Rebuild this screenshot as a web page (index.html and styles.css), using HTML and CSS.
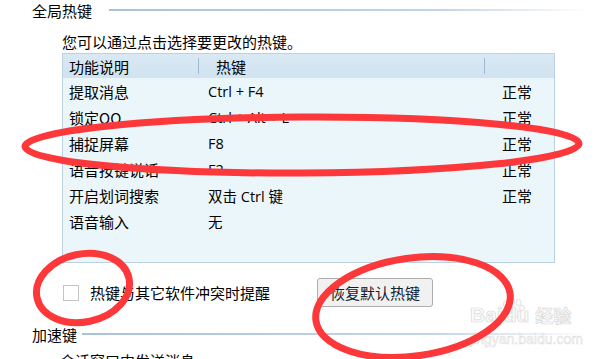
FILE: index.html
```html
<!DOCTYPE html>
<html lang="zh-cn">
<head>
  <meta charset="UTF-8">
  <title>全局热键</title>
  <link rel="stylesheet" href="styles.css">
</head>
<body>
  <div class="group-title">
    <span>全局热键</span>
    <div class="rule"></div>
  </div>
  <p class="intro">您可以通过点击选择要更改的热键。</p>

  <div class="hotkey-table">
    <div class="head">
      <div class="h-name">功能说明</div>
      <div class="sep"></div>
      <div class="h-key">热键</div>
      <div class="sep"></div>
    </div>
    <div class="row"><div class="c-name">提取消息</div><div class="c-key">Ctrl + F4</div><div class="c-state">正常</div></div>
    <div class="row"><div class="c-name">锁定QQ</div><div class="c-key">Ctrl + Alt + L</div><div class="c-state">正常</div></div>
    <div class="row"><div class="c-name">捕捉屏幕</div><div class="c-key">F8</div><div class="c-state">正常</div></div>
    <div class="row"><div class="c-name">语音按键说话</div><div class="c-key">F2</div><div class="c-state">正常</div></div>
    <div class="row"><div class="c-name">开启划词搜索</div><div class="c-key">双击 Ctrl 键</div><div class="c-state">正常</div></div>
    <div class="row"><div class="c-name">语音输入</div><div class="c-key">无</div><div class="c-state"></div></div>
  </div>

  <div class="options">
    <span class="checkbox"></span>
    <label class="opt-label">热键与其它软件冲突时提醒</label>
    <button class="btn">恢复默认热键</button>
  </div>

  <div class="group-title second">
    <span>加速键</span>
    <div class="rule"></div>
  </div>
  <p class="intro cut">会话窗口中发送消息</p>

  <div class="watermark">
    <div class="wm-logo">
      <span>Bai</span>
      <svg class="paw" width="26" height="22" viewBox="0 0 26 22">
        <ellipse cx="6" cy="6" rx="2.6" ry="3.2" />
        <ellipse cx="12" cy="3.5" rx="2.6" ry="3.2" />
        <ellipse cx="18.5" cy="4.5" rx="2.6" ry="3.2" />
        <ellipse cx="22" cy="10" rx="2.4" ry="3" />
        <path d="M5 19 C5 13 9 10 13 10 C17 10 20 14 20 19 Z" />
      </svg>
      <span class="du">du</span>
      <span class="jy">经验</span>
    </div>
    <div class="wm-url">jingyan.baidu.com</div>
  </div>

  <svg class="marks" width="614" height="359" viewBox="0 0 614 359">
    <ellipse cx="302" cy="145" rx="277" ry="28" transform="rotate(-0.3 302 145)" />
    <ellipse cx="83" cy="288" rx="47" ry="34" transform="rotate(-12 83 288)" />
    <ellipse cx="413" cy="307" rx="98" ry="49" transform="rotate(-8 413 307)" />
  </svg>
</body>
</html>
```

FILE: styles.css
```css
body {
  margin: 0;
  width: 614px;
  height: 359px;
  overflow: hidden;
  background: #fff;
  font-family: "Noto Sans CJK SC", "Noto Sans", sans-serif;
  font-size: 15px;
  color: #000;
  position: relative;
}
.group-title {
  display: flex;
  align-items: center;
  height: 22px;
  margin-left: 32px;
}
.group-title span {
  line-height: 22px;
}
.rule {
  flex: 1;
  height: 2px;
  margin: 0 24px 0 17px;
  margin-top: -2px;
  background: linear-gradient(to right, #a9c2d9, #c4d6e6 70%, rgba(255,255,255,0));
}
.intro {
  margin: 9px 0 0 62px;
  line-height: 22px;
}
.hotkey-table {
  margin: 0 0 0 62px;
  width: 491px;
  height: 208px;
  border: 1px solid #bcd2e3;
  background: #ebf6fb;
}
.head {
  display: flex;
  align-items: center;
  height: 24px;
  background: linear-gradient(#d9e9f4, #d0e3f0);
}
.h-name {
  width: 129px;
  padding-left: 6px;
}
.h-key {
  width: 268px;
  padding-left: 17px;
}
.sep {
  width: 1px;
  height: 16px;
  background: #9dbad2;
}
.row {
  display: flex;
  align-items: center;
  height: 26px;
}
.c-name {
  width: 139px;
  padding-left: 6px;
}
.c-key {
  width: 294px;
  font-family: "Open Sans", "Noto Sans CJK SC", sans-serif;
  font-size: 14.5px;
}
.options {
  display: flex;
  align-items: center;
  margin: 15px 0 0 63px;
  height: 29px;
}
.checkbox {
  width: 14px;
  height: 14px;
  border: 1px solid #c4c4c4;
  background: #fff;
  margin-right: 11px;
}
.opt-label {
  width: 227px;
}
.btn {
  width: 116px;
  height: 29px;
  padding: 0;
  border: 1px solid #adadad;
  border-radius: 3px;
  background: #f1f1f1;
  font-family: inherit;
  font-size: 15px;
  color: #102030;
}
.group-title.second {
  margin-top: 17px;
}
.group-title.second .rule {
  margin-left: 5px;
}
.intro.cut {
  margin: 4px 0 0 60px;
}
.watermark {
  position: absolute;
  left: 470px;
  top: 300px;
  width: 110px;
  color: #fbfbfb;
  -webkit-text-stroke: 0.7px #d9d9d9;
  font-family: "Liberation Sans", "Noto Sans CJK SC", sans-serif;
}
.wm-logo {
  display: flex;
  align-items: flex-end;
  height: 26px;
  font-size: 21px;
  font-weight: bold;
  line-height: 22px;
}
.paw {
  margin: 0 -22px 6px -3px;
  fill: #fbfbfb;
  stroke: #d9d9d9;
  stroke-width: 0.8;
}
.du {
  margin-right: 6px;
}
.jy {
  font-size: 18px;
  font-family: "Noto Sans CJK SC", sans-serif;
}
.wm-url {
  margin-top: 5px;
  font-size: 14px;
  line-height: 16px;
  -webkit-text-stroke: 0.5px #dcdcdc;
}
.marks {
  position: absolute;
  left: 0;
  top: 0;
  pointer-events: none;
}
.marks ellipse {
  fill: none;
  stroke: #fd383a;
  stroke-width: 7;
}
```
